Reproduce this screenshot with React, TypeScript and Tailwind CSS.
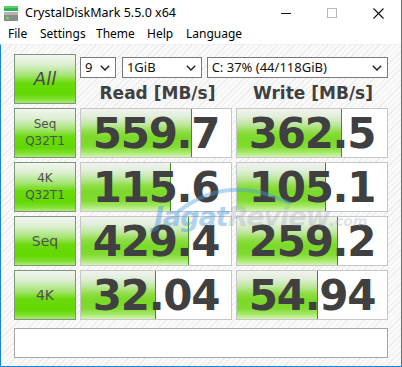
import React from "react";

type Row = {
  label: string[];
  size: string;
  read: string;
  rw: number;
  write: string;
  ww: number;
};

const rows: Row[] = [
  { label: ["Seq", "Q32T1"], size: "text-[12px] leading-[17px]", read: "559.7", rw: 111, write: "362.5", ww: 105 },
  { label: ["4K", "Q32T1"], size: "text-[12px] leading-[17px]", read: "115.6", rw: 90, write: "105.1", ww: 89 },
  { label: ["Seq"], size: "text-[14px] leading-[17px]", read: "429.4", rw: 108, write: "259.2", ww: 101 },
  { label: ["4K"], size: "text-[14px] leading-[17px]", read: "32.04", rw: 75, write: "54.94", ww: 81 },
];

const btn =
  "flex flex-col items-center justify-center border border-[#7f9479] text-[#505050] bg-[linear-gradient(to_bottom,#f3f5f1_0%,#dcefd0_20%,#a6e474_42%,#6adb0c_58%,#62d800_80%,#7fe030_92%,#a9eb78_100%)] [font-family:'DejaVu_Sans',sans-serif]";

function Chevron() {
  return (
    <svg width="10" height="6" viewBox="0 0 10 6" className="shrink-0">
      <path d="M0.8 0.8 L5 5 L9.2 0.8" fill="none" stroke="#1e1e1e" strokeWidth="1.4" />
    </svg>
  );
}

function Select({ text, w }: { text: string; w: string }) {
  return (
    <div className={`${w} h-[21px] bg-white border border-[#7a7a7a] flex items-center justify-between pl-[4px] pr-[5px] text-[13px] text-[#111] [font-family:'Noto_Sans',sans-serif]`}>
      <span className="leading-none">{text}</span>
      <Chevron />
    </div>
  );
}

function Value({ v, w }: { v: string; w: number }) {
  return (
    <div className="relative h-[50px] border border-[#c6c6c6] bg-white overflow-hidden">
      <div
        className="absolute left-0 top-0 bottom-0 border-r border-[#3f8f22] bg-[linear-gradient(to_bottom,#f1f2f0_0%,#e2eedb_15%,#bfe79f_32%,#8edd44_48%,#7bd92a_60%,#80db30_78%,#a6e86a_90%,#d2f4b4_100%)]"
        style={{ width: w }}
      />
      <div className="relative h-full flex items-center justify-center text-[42px] font-bold tracking-[-1.3px] text-[#404040] leading-none [font-family:'DejaVu_Sans',sans-serif] pt-[1px]">
        {v}
      </div>
    </div>
  );
}

export default function App() {
  return (
    <div className="w-[402px] h-[367px] flex flex-col border-r border-b border-[#1883d7] bg-white overflow-hidden [font-family:'Noto_Sans',sans-serif]">
      {/* Title bar */}
      <div className="h-[26px] flex items-center shrink-0">
        <div className="pl-[4px] pr-[7px] flex items-center">
          <svg width="14" height="15" viewBox="0 0 14 15">
            <rect x="0" y="0" width="14" height="5" fill="#2fb34a" />
            <rect x="0" y="0" width="14" height="2" fill="#5ccf6a" />
            <rect x="0" y="6" width="14" height="9" fill="#8c8c8c" />
            <rect x="0" y="6" width="14" height="3" fill="#b4b4b4" />
            <rect x="2" y="11" width="3" height="2" fill="#6fe05a" />
          </svg>
        </div>
        <span className="text-[12.5px] text-[#000] leading-none">CrystalDiskMark 5.5.0 x64</span>
        <div className="ml-auto flex h-full">
          <div className="w-[46px] h-full flex items-center justify-center">
            <svg width="10" height="10" viewBox="0 0 10 10">
              <path d="M0 5.5 H10" stroke="#111" strokeWidth="1" />
            </svg>
          </div>
          <div className="w-[46px] h-full flex items-center justify-center">
            <svg width="10" height="10" viewBox="0 0 10 10">
              <rect x="0.5" y="0.5" width="9" height="9" fill="none" stroke="#b8b8b8" strokeWidth="1" />
            </svg>
          </div>
          <div className="w-[46px] h-full flex items-center justify-center">
            <svg width="11" height="11" viewBox="0 0 11 11">
              <path d="M0.5 0.5 L10.5 10.5 M10.5 0.5 L0.5 10.5" stroke="#111" strokeWidth="1.1" />
            </svg>
          </div>
        </div>
      </div>
      {/* Menu bar */}
      <div className="h-[18px] flex items-start pl-[8px] text-[12px] leading-[16px] text-[#000] shrink-0">
        <span className="w-[32px]">File</span>
        <span className="w-[56px]">Settings</span>
        <span className="w-[51px]">Theme</span>
        <span className="w-[39px]">Help</span>
        <span>Language</span>
      </div>
      {/* Body */}
      <div className="relative flex-1 border-l border-[#1883d7] border-t border-t-[#f0f0f0] pl-[13px] pt-[9px] bg-[repeating-linear-gradient(135deg,#fafafa_0px,#fafafa_3px,#ececec_3px,#ececec_4px)]">
        <div className="grid grid-cols-[62px_152px_152px] gap-x-[4px] gap-y-[4px]">
          <div className={`${btn} h-[50px]`}>
            <span className="text-[18px] leading-none italic text-[#4a4a4a]">All</span>
          </div>
          <div className="col-span-2 flex flex-col h-[50px]">
            <div className="flex mt-[3px] gap-[6px]">
              <Select text="9" w="w-[36px]" />
              <Select text="1GiB" w="w-[80px]" />
              <Select text="C: 37% (44/118GiB)" w="w-[182px] ml-[-1px]" />
            </div>
            <div className="flex-1 grid grid-cols-2 gap-x-[4px] items-center text-[17px] font-bold text-[#404040] [font-family:'DejaVu_Sans',sans-serif] pt-[3px]">
              <div className="text-center pl-[3px]">Read [MB/s]</div>
              <div className="text-center pl-[2px]">Write [MB/s]</div>
            </div>
          </div>
          {rows.map((r, i) => (
            <React.Fragment key={i}>
              <div className={`${btn} h-[50px] ${r.size}`}>
                {r.label.map((l, j) => (
                  <span key={j}>{l}</span>
                ))}
              </div>
              <Value v={r.read} w={r.rw} />
              <Value v={r.write} w={r.ww} />
            </React.Fragment>
          ))}
        </div>
        <div className="mt-[8px] w-[374px] h-[30px] bg-white border border-[#a6a6a6]" />

        {/* Watermark */}
        <div className="absolute left-[153px] top-[136px] pointer-events-none select-none">
          <svg width="130" height="40" viewBox="0 0 130 40" className="absolute left-[20px] top-[0px] opacity-40">
            <path d="M5 30 Q 55 -8 115 22" fill="none" stroke="#4b9de0" strokeWidth="4" strokeLinecap="round" />
          </svg>
          <div className="relative flex items-baseline pt-[16px] [font-family:'DejaVu_Sans',sans-serif] font-bold italic">
            <span className="text-[27px] text-[#3d93dd] opacity-40 tracking-[-1px]">Jagat</span>
            <span className="text-[27px] text-[#9aa3ad] opacity-30 tracking-[-1px]">Review</span>
            <span className="text-[14px] text-[#9aa3ad] opacity-30">.com</span>
          </div>
        </div>
      </div>
    </div>
  );
}
